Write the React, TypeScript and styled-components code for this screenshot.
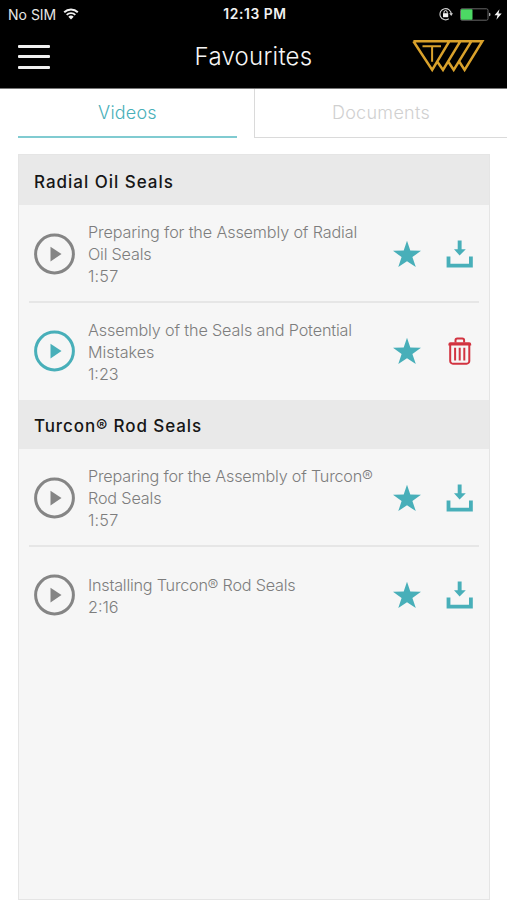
import React from "react";
import styled, { createGlobalStyle } from "styled-components";

const TEAL = "#48afb9";
const GREY = "#858585";
const RED = "#d23340";
const GOLD = "#d9a12b";

const GlobalStyle = createGlobalStyle`
  * { box-sizing: border-box; }
  body { margin: 0; background: #fff; }
`;

const Screen = styled.div`
  width: 507px;
  height: 900px;
  display: flex;
  flex-direction: column;
  overflow: hidden;
  background: #fff;
  font-family: Inter, "Liberation Sans", sans-serif;
`;

const StatusBar = styled.div`
  height: 28px;
  display: grid;
  grid-template-columns: 1fr auto 1fr;
  align-items: center;
  padding: 0 5px 0 8px;
  background: #000;
  color: #e6e6e6;
  font-size: 14px;
`;

const Carrier = styled.div`
  display: flex;
  align-items: center;
  gap: 7px;
`;

const Clock = styled.div`
  color: #f2f2f2;
  font-weight: 600;
  font-size: 13.8px;
  letter-spacing: 0.6px;
`;

const Indicators = styled.div`
  display: flex;
  justify-content: flex-end;
  align-items: center;
`;

const Header = styled.header`
  height: 61px;
  display: grid;
  grid-template-columns: 90px 1fr 90px;
  align-items: center;
  padding: 0 22px 3px 18px;
  background: #000;
  border-bottom: 1px solid #777;
`;

const Title = styled.h1`
  margin: 0;
  padding-left: 4px;
  text-align: center;
  color: #f5f5f5;
  font-weight: 300;
  font-size: 24px;
  letter-spacing: 0.25px;
  line-height: 30px;
`;

const MenuButton = styled.button`
  width: 32px;
  padding: 0;
  border: 0;
  background: none;
  display: flex;
  flex-direction: column;
  gap: 7.5px;
`;

const MenuLine = styled.span`
  height: 3px;
  border-radius: 1px;
  background: #f0f0f0;
`;

const LogoSlot = styled.div`
  display: flex;
  justify-content: flex-end;
`;

const Tabs = styled.nav`
  height: 49px;
  display: grid;
  grid-template-columns: 219px 1fr;
  column-gap: 17px;
  padding-left: 18px;
`;

const Tab = styled.div<{ $active?: boolean }>`
  display: flex;
  justify-content: center;
  align-items: center;
  padding-bottom: ${(p) => (p.$active ? 0 : 1)}px;
  font-weight: 300;
  font-size: 18px;
  letter-spacing: ${(p) => (p.$active ? 0.2 : 0.3)}px;
  color: ${(p) => (p.$active ? TEAL : "#d0d0d0")};
  border-bottom: ${(p) => (p.$active ? "2px solid #80cbd1" : "1px solid #dadada")};
  border-left: ${(p) => (p.$active ? "0" : "1px solid #dadada")};
`;

const Panel = styled.main`
  flex: 1;
  margin: 16px 17px 0 18px;
  border: 1px solid #e5e5e5;
  background: #f6f6f6;
`;

const SectionTitle = styled.h2<{ $height: number; $spacing: number }>`
  height: ${(p) => p.$height}px;
  margin: 0;
  padding: 3px 15px 0;
  display: flex;
  align-items: center;
  background: #e9e9e9;
  color: #161616;
  font-size: 17px;
  font-weight: 500;
  letter-spacing: ${(p) => p.$spacing}px;
`;

const Row = styled.div<{ $divided: boolean }>`
  height: ${(p) => (p.$divided ? 98 : 97)}px;
  margin: 0 10px;
  padding: 1px 5px 0 4px;
  display: grid;
  grid-template-columns: 43px 292px 30px 1fr;
  align-items: center;
  column-gap: 12px;
  border-bottom: 2px solid ${(p) => (p.$divided ? "#e6e6e6" : "transparent")};
`;

const Text = styled.div`
  font-weight: 300;
  font-size: 16.2px;
  line-height: 22px;
  color: #7d7d7d;
  padding-top: 1px;
  white-space: nowrap;
`;

const Line = styled.div<{ $spacing: number }>`
  letter-spacing: ${(p) => p.$spacing}px;
`;

const ActionSlot = styled.div`
  display: flex;
  justify-content: flex-end;
`;

const Icon = styled.svg`
  display: block;
  flex: none;
`;

const LockIcon = styled(Icon)`
  margin-right: 7px;
`;

const BatteryIcon = styled(Icon)`
  margin-right: 3px;
`;

const Wifi = () => (
  <Icon width="16" height="12" viewBox="0 0 16 12" fill="none" stroke="#f2f2f2" strokeWidth="1.9">
    <path d="M1.2 4.3a9.7 9.7 0 0 1 13.6 0M3.7 6.9a6.1 6.1 0 0 1 8.6 0" />
    <path d="M8 11.5 5.3 8.8a3.9 3.9 0 0 1 5.4 0z" fill="#f2f2f2" stroke="none" />
  </Icon>
);

const RotationLock = () => (
  <LockIcon width="14" height="14" viewBox="0 0 14 14" fill="none">
    <path d="M9.8 11.8A5.6 5.6 0 1 1 12.2 7.2" stroke="#cfcfcf" strokeWidth="1.1" />
    <path d="M10.2 6.3h3.8l-1.8 2.8z" fill="#cfcfcf" />
    <rect x="4" y="6.2" width="5.2" height="4" fill="#f2f2f2" />
    <path d="M5 6.4V5.2a1.6 1.6 0 0 1 3.2 0v1.2" stroke="#f2f2f2" />
  </LockIcon>
);

const Battery = () => (
  <BatteryIcon width="31" height="13" viewBox="0 0 31 13">
    <rect x=".5" y=".8" width="27.5" height="11.4" rx="1.5" fill="none" stroke="#666" />
    <rect x="1" y="1.2" width="11.5" height="10.6" rx=".7" fill="#4cd964" />
    <path d="M29 4.8c2 0 2 3.5 0 3.5z" fill="#aaa" />
  </BatteryIcon>
);

const Bolt = () => (
  <Icon width="8" height="11" viewBox="0 0 8 11">
    <path d="M5.5.2.5 6.2h3L2.4 10.8 7.7 4.6H4.5z" fill="#f5f5f5" />
  </Icon>
);

const Logo = () => (
  <Icon width="74" height="35" viewBox="0 0 74 35" fill="none" stroke={GOLD} strokeWidth="2.5">
    <path d="M2.4 2.2H71.3L53.6 31 48.5 23M2.4 2.2 21.2 31 38 2.8M26.5 23 32 31 49 2.8M37.5 23 42.7 31 60 2.8" />
    <path d="M11.5 7.3h18.5M21.1 7.3v15.4" strokeWidth="2" />
  </Icon>
);

const Play = ({ color }: { color: string }) => (
  <Icon width="42" height="42" viewBox="0 0 42 42">
    <circle cx="21.5" cy="21" r="18.9" fill="none" stroke={color} strokeWidth="3" />
    <path d="M17.5 13.8v14.6l11-7.3z" fill={color} />
  </Icon>
);

const Star = () => (
  <Icon width="30" height="28" viewBox="0 0 30 28">
    <path
      d="M15 .8 18.3 10.6 29 10.8 20.4 17.1 23.8 27.1 15 21.3 6.3 27.1 9.6 17.1 1 10.8 11.7 10.6z"
      fill={TEAL}
    />
  </Icon>
);

const Download = () => (
  <Icon width="28" height="28" viewBox="0 0 28 28" fill={TEAL}>
    <path d="M11.7.4h3.9v8.8h4.2L13.6 15.5 8 9.2h3.7z" />
    <path d="M.6 16.4h3.8v7.3h18.6v-7.3h3.8v11H.6z" />
  </Icon>
);

const Trash = () => (
  <Icon width="28" height="28" viewBox="0 0 28 28" fill="none" stroke={RED} strokeWidth="2">
    <path d="M4.2 8V24a2.7 2.7 0 0 0 2.7 2.7h13.7a2.7 2.7 0 0 0 2.7-2.7V8" />
    <path d="M2.4 8.4V7.2a2 2 0 0 1 2-2h18.8a2 2 0 0 1 2 2v1.2z" fill={RED} stroke="none" />
    <path d="M9.5 5.4V3.3a1.8 1.8 0 0 1 1.8-1.8h5a1.8 1.8 0 0 1 1.8 1.8v2.1" />
    <path d="M9.1 10.8v12.6M13.7 10.8v12.6M18.3 10.8v12.6" />
  </Icon>
);

type Video = {
  lines: [string, number][];
  playing?: boolean;
  downloaded?: boolean;
};

const sections: { title: string; height: number; spacing: number; videos: Video[] }[] = [
  {
    title: "Radial Oil Seals",
    height: 50,
    spacing: 0.98,
    videos: [
      { lines: [["Preparing for the Assembly of Radial", -0.14], ["Oil Seals", -0.2], ["1:57", 0.2]] },
      {
        lines: [["Assembly of the Seals and Potential", -0.14], ["Mistakes", 0], ["1:23", 0]],
        playing: true,
        downloaded: true,
      },
    ],
  },
  {
    title: "Turcon® Rod Seals",
    height: 49,
    spacing: 0.9,
    videos: [
      { lines: [["Preparing for the Assembly of Turcon®", -0.2], ["Rod Seals", -0.15], ["1:57", 0.2]] },
      { lines: [["Installing Turcon® Rod Seals", -0.22], ["2:16", 0]] },
    ],
  },
];

export default function App() {
  return (
    <Screen>
      <GlobalStyle />
      <StatusBar>
        <Carrier>
          <span>No SIM</span>
          <Wifi />
        </Carrier>
        <Clock>12:13 PM</Clock>
        <Indicators>
          <RotationLock />
          <Battery />
          <Bolt />
        </Indicators>
      </StatusBar>
      <Header>
        <MenuButton aria-label="Menu">
          <MenuLine />
          <MenuLine />
          <MenuLine />
        </MenuButton>
        <Title>Favourites</Title>
        <LogoSlot>
          <Logo />
        </LogoSlot>
      </Header>
      <Tabs>
        <Tab $active>Videos</Tab>
        <Tab>Documents</Tab>
      </Tabs>
      <Panel>
        {sections.map((s) => (
          <section key={s.title}>
            <SectionTitle $height={s.height} $spacing={s.spacing}>{s.title}</SectionTitle>
            {s.videos.map((v, i) => (
              <Row key={i} $divided={i === 0}>
                <Play color={v.playing ? TEAL : GREY} />
                <Text>
                  {v.lines.map(([text, spacing]) => (
                    <Line key={text} $spacing={spacing}>{text}</Line>
                  ))}
                </Text>
                <Star />
                <ActionSlot>{v.downloaded ? <Trash /> : <Download />}</ActionSlot>
              </Row>
            ))}
          </section>
        ))}
      </Panel>
    </Screen>
  );
}
